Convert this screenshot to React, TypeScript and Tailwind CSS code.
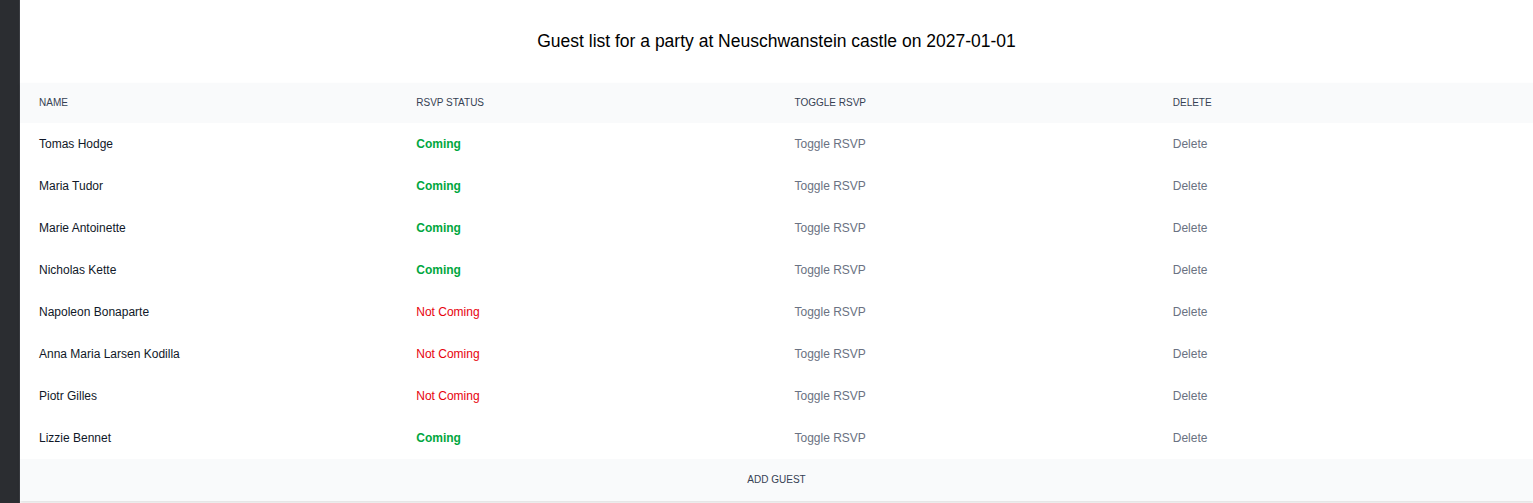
import React, { useState } from "react"

type Guest = {
  id: number
  name: string
  coming: boolean
}

const initialGuests: Guest[] = [
  { id: 1, name: "Tomas Hodge", coming: true },
  { id: 2, name: "Maria Tudor", coming: true },
  { id: 3, name: "Marie Antoinette", coming: true },
  { id: 4, name: "Nicholas Kette", coming: true },
  { id: 5, name: "Napoleon Bonaparte", coming: false },
  { id: 6, name: "Anna Maria Larsen Kodilla", coming: false },
  { id: 7, name: "Piotr Gilles", coming: false },
  { id: 8, name: "Lizzie Bennet", coming: true },
]

export default function App() {
  const [guests, setGuests] = useState<Guest[]>(initialGuests)

  const toggleRsvp = (id: number) => {
    setGuests((gs) => gs.map((g) => (g.id === id ? { ...g, coming: !g.coming } : g)))
  }

  const deleteGuest = (id: number) => {
    setGuests((gs) => gs.filter((g) => g.id !== id))
  }

  const addGuest = () => {
    const id = Date.now()
    setGuests((gs) => [...gs, { id, name: "New Guest", coming: true }])
  }

  return (
    <div className="flex min-h-[503px] bg-white font-['Liberation_Sans',Arial,sans-serif] text-black">
      {/* dark side strip */}
      <div className="w-[20px] shrink-0 bg-[#2b2d31] border-r border-[#3b3d42]" />

      <div className="flex-1 min-w-0">
        <h1 className="pt-[27px] pb-[28px] text-center text-[17.5px] leading-7 text-black">
          Guest list for a party at Neuschwanstein castle on 2027-01-01
        </h1>

        <div className="shadow-[0_2px_3px_rgba(0,0,0,0.12)]">
          <table className="w-full table-fixed border-collapse">
            <thead className="bg-gray-50">
              <tr>
                {["Name", "RSVP status", "Toggle RSVP", "Delete"].map((h) => (
                  <th
                    key={h}
                    className="pl-[18px] pr-[18px] first:pl-[19px] py-3 text-left text-[10px] leading-4 font-normal uppercase text-gray-700"
                  >
                    {h}
                  </th>
                ))}
              </tr>
            </thead>
            <tbody>
              {guests.map((g) => (
                <tr key={g.id}>
                  <td className="pl-[19px] pr-[17px] py-[11px] text-xs leading-5 text-gray-900">{g.name}</td>
                  <td className="px-[18px] py-[11px] text-xs leading-5">
                    {g.coming ? (
                      <span className="font-bold text-green-600">Coming</span>
                    ) : (
                      <span className="text-red-600">Not Coming</span>
                    )}
                  </td>
                  <td className="px-[18px] py-[11px] text-xs leading-5">
                    <button className="text-gray-500" onClick={() => toggleRsvp(g.id)}>
                      Toggle RSVP
                    </button>
                  </td>
                  <td className="px-[18px] py-[11px] text-xs leading-5">
                    <button className="text-gray-500" onClick={() => deleteGuest(g.id)}>
                      Delete
                    </button>
                  </td>
                </tr>
              ))}
            </tbody>
          </table>
          <button
            className="block w-full bg-gray-50 py-[13px] text-center text-[10px] leading-4 uppercase text-gray-700"
            onClick={addGuest}
          >
            Add guest
          </button>
        </div>
      </div>
    </div>
  )
}
